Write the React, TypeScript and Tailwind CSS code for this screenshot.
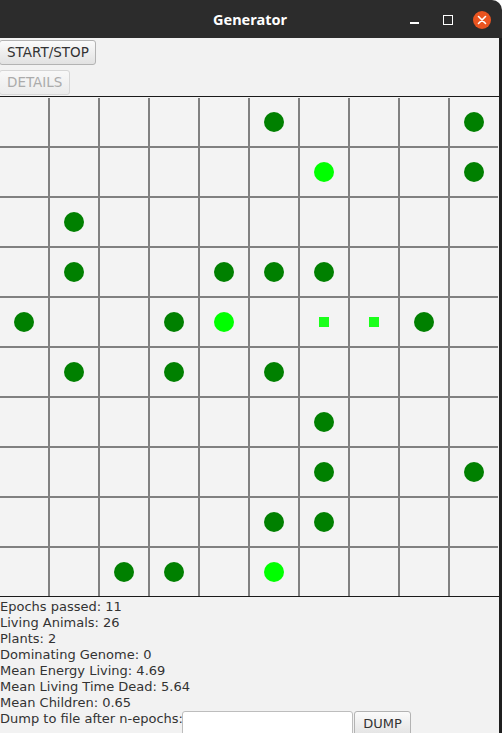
import React from "react";

type Cell = "d" | "l" | "s";

const items: Record<string, Cell> = {
  "0-5": "d", "0-9": "d",
  "1-6": "l", "1-9": "d",
  "2-1": "d",
  "3-1": "d", "3-4": "d", "3-5": "d", "3-6": "d",
  "4-0": "d", "4-3": "d", "4-4": "l", "4-6": "s", "4-7": "s", "4-8": "d",
  "5-1": "d", "5-3": "d", "5-5": "d",
  "6-6": "d",
  "7-6": "d", "7-9": "d",
  "8-5": "d", "8-6": "d",
  "9-2": "d", "9-3": "d", "9-5": "l",
};

const font = { fontFamily: '"DejaVu Sans", sans-serif' };

export default function App() {
  const cells: React.ReactNode[] = [];
  for (let r = 0; r < 10; r++) {
    for (let c = 0; c < 10; c++) {
      const it = items[`${r}-${c}`];
      cells.push(
        <div key={`${r}-${c}`} className="bg-[#f3f3f3] flex items-center justify-center">
          {it === "d" && <div className="w-[20px] h-[20px] rounded-full bg-[#008000]" />}
          {it === "l" && <div className="w-[20px] h-[20px] rounded-full bg-[#00ff00]" />}
          {it === "s" && <div className="w-[10px] h-[10px] bg-[#1aff1a]" />}
        </div>
      );
    }
  }

  const stats = [
    "Epochs passed: 11",
    "Living Animals: 26",
    "Plants: 2",
    "Dominating Genome: 0",
    "Mean Energy Living: 4.69",
    "Mean Living Time Dead: 5.64",
    "Mean Children: 0.65",
  ];

  return (
    <div className="w-[502px] h-[733px] bg-white overflow-hidden" style={font}>
      <div className="h-[38px] bg-[#2c2c2c] rounded-tr-[10px] relative flex items-center justify-center">
        <span
          className="text-white font-bold text-[14.5px] mt-[2px] ml-[-2px]"
          style={{ fontFamily: '"Noto Sans", "Open Sans", sans-serif' }}
        >
          Generator
        </span>
        <div className="absolute left-[410px] top-[22px] w-[9px] h-[2px] bg-white" />
        <div className="absolute left-[443px] top-[15px] w-[10px] h-[10px] border-[1.5px] border-white" />
        <div className="absolute left-[473px] top-[11px] w-[18px] h-[18px] rounded-full bg-[#e95420] flex items-center justify-center">
          <svg width="10" height="10" viewBox="0 0 10 10">
            <path d="M1.5 1.5 L8.5 8.5 M8.5 1.5 L1.5 8.5" stroke="white" strokeWidth="1.6" strokeLinecap="round" />
          </svg>
        </div>
      </div>
      <div className="flex h-[695px] overflow-hidden">
        <div className="flex-1 bg-[#f2f2f2] flex flex-col items-start">
          <button className="shrink-0 mt-[2px] h-[25px] w-[97px] ml-[-1px] pl-[7px] text-left text-[13.5px] text-[#333] border border-[#b3b3b3] rounded-[3px] bg-gradient-to-b from-[#fbfbfb] to-[#e2e2e2]">
            START/STOP
          </button>
          <button className="shrink-0 mt-[5px] h-[25px] w-[71px] ml-[-1px] pl-[7px] text-left text-[13.5px] text-[#ababab] border border-[#d6d6d6] rounded-[3px] bg-gradient-to-b from-[#f8f8f8] to-[#ececec]">
            DETAILS
          </button>
          <div className="shrink-0 mt-[1px] w-full border-t border-b border-[#1a1a1a] pt-px bg-[#f3f3f3]">
            <div className="grid grid-cols-[repeat(10,48px)] grid-rows-[repeat(10,48px)] gap-[2px] bg-[#808080] w-[498px]">
              {cells}
            </div>
          </div>
          <div className="shrink-0 mt-[2px] text-[13px] leading-[16px] text-[#333] w-full">
            {stats.map((s) => (
              <div key={s}>{s}</div>
            ))}
            <div className="flex items-start">
              <span>Dump to file after n-epochs:</span>
              <div className="-ml-px w-[171px] h-[26px] bg-white border border-[#bdbdbd] rounded-[3px]" />
              <button className="ml-px h-[26px] w-[57px] text-[13px] text-[#333] border border-[#b3b3b3] rounded-[3px] bg-gradient-to-b from-[#fbfbfb] to-[#e2e2e2]">
                DUMP
              </button>
            </div>
          </div>
        </div>
        <div className="w-[3px] bg-[#1f1f1f]" />
      </div>
    </div>
  );
}
